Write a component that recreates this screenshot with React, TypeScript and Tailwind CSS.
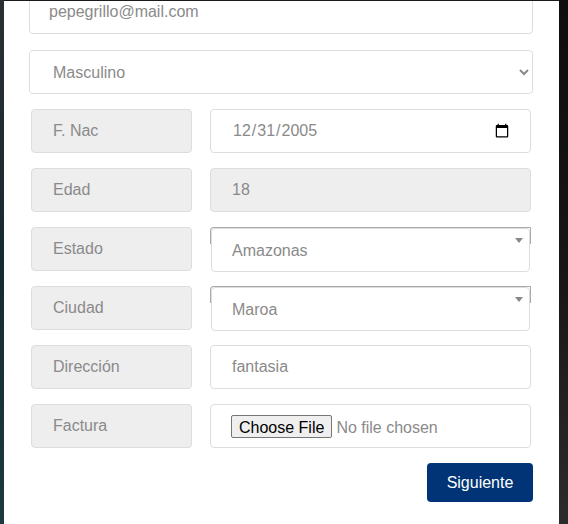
import React from "react";

const labelCls =
  "w-[161px] h-[44px] shrink-0 flex items-center pl-[21px] bg-[#eeeeee] border border-[#dddddd] rounded text-[16px] text-[#8a8a8a]";
const fieldCls =
  "w-[321px] h-[44px] border border-[#dddddd] rounded text-[16px] text-[#8a8a8a] outline-none";

function Row({ label, children }: { label: string; children: React.ReactNode }) {
  return (
    <div className="flex items-start gap-[18px] pl-[2px]">
      <div className={labelCls}>{label}</div>
      {children}
    </div>
  );
}

function FakeSelect({ value }: { value: string }) {
  // select2-style widget: the old select peeks out above the rendered box
  return (
    <div className="relative w-[321px] h-[44px]">
      <div className="absolute left-0 top-0 w-[321px] h-[17px] border-t border-x border-[#aaaaaa] rounded-tl-sm" />
      <div className="absolute left-[1px] top-[1px] w-[319px] h-[44px] flex items-center pl-[20px] pt-[2px] border border-[#dddddd] rounded bg-white text-[16px] text-[#8a8a8a]">
        {value}
      </div>
      <div className="absolute right-[8px] top-[11px] w-0 h-0 border-x-[4px] border-x-transparent border-t-[5px] border-t-[#888888]" />
    </div>
  );
}

export default function App() {
  return (
    <div
      className="w-[568px] h-[524px] flex bg-[#111] overflow-hidden"
      style={{ fontFamily: '"Liberation Sans", Arial, sans-serif' }}
    >
      <div className="w-[4px] h-full bg-gradient-to-b from-[#2a2f33] via-[#152a30] to-[#1d3a40]" />
      <div className="flex flex-col w-[555px] h-full">
        <div className="h-[1px] bg-[#1a1a1a]" />
        <div className="flex-1 bg-white overflow-hidden pl-[25px]">
          <div className="flex flex-col gap-[15px] w-[504px] mt-[-11px]">
            <input
              type="email"
              defaultValue="pepegrillo@mail.com"
              className="w-[504px] h-[44px] px-[19px] border border-[#dddddd] rounded text-[16px] text-[#8a8a8a] outline-none"
            />
            <select
              defaultValue="M"
              className="w-[504px] h-[44px] mt-px pl-[19px] pr-[6px] border border-[#dddddd] rounded bg-white text-[16px] text-[#8a8a8a] outline-none"
            >
              <option value="M">Masculino</option>
              <option value="F">Femenino</option>
            </select>
            <Row label="F. Nac">
              <input
                type="date"
                defaultValue="2005-12-31"
                className={fieldCls + " bg-white pl-[21px] pr-[18px]"}
              />
            </Row>
            <Row label="Edad">
              <div className={fieldCls + " bg-[#eeeeee] flex items-center pl-[21px]"}>18</div>
            </Row>
            <Row label="Estado">
              <FakeSelect value="Amazonas" />
            </Row>
            <Row label="Ciudad">
              <FakeSelect value="Maroa" />
            </Row>
            <Row label="Dirección">
              <input type="text" defaultValue="fantasia" className={fieldCls + " bg-white pl-[21px]"} />
            </Row>
            <Row label="Factura">
              <input
                type="file"
                className={
                  fieldCls +
                  " bg-white pl-[20px] pt-[10px] file:h-[23px] file:mr-[4px] file:px-[7px] file:border file:border-solid file:border-[#767676] file:bg-[#efefef] file:text-black file:rounded-[2px]"
                }
              />
            </Row>
            <div className="flex justify-end">
              <button className="w-[106px] h-[39px] rounded bg-[#003476] text-white text-[16px]">
                Siguiente
              </button>
            </div>
          </div>
        </div>
      </div>
      <div className="w-[9px] h-full bg-gradient-to-b from-[#0e0e0e] via-[#161616] to-[#2c2c2c]" />
    </div>
  );
}
